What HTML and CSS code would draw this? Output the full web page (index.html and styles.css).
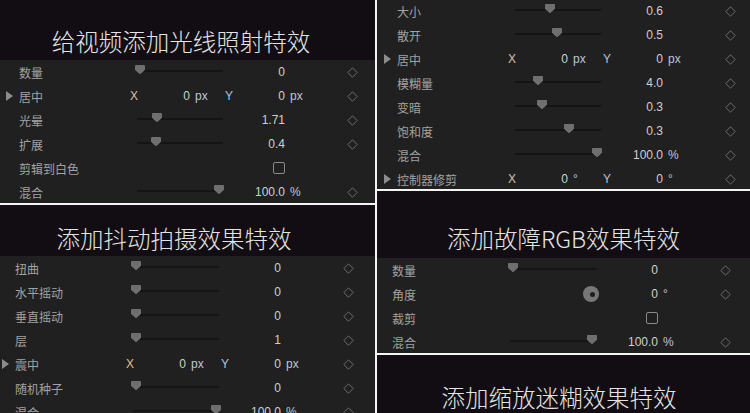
FILE: index.html
```html
<!DOCTYPE html>
<html lang="zh">
<head>
<meta charset="utf-8">
<title>特效</title>
<link rel="stylesheet" href="styles.css">
</head>
<body>
<svg width="0" height="0" class="defs">
  <defs>
    <symbol id="thumb" viewBox="0 0 10 9"><polygon points="0.5,0.5 9.5,0.5 9.5,5 5,8.8 0.5,5" fill="#6f6f6f" stroke="#8a8a8a" stroke-width="0.6"/></symbol>
    <symbol id="diamond" viewBox="0 0 11 11"><polygon points="5.5,0.8 10.2,5.5 5.5,10.2 0.8,5.5" fill="none" stroke="#6c6c6c" stroke-width="1"/></symbol>
    <symbol id="tri" viewBox="0 0 7 10"><polygon points="0,0 7,5 0,10" fill="#8c8c8c"/></symbol>
  </defs>
</svg>
<div class="page">
  <div class="col">
    <section class="panel p-lt">
      <div class="title t-lt">给视频添加光线照射特效</div>
      <div class="rows">
        <div class="row"><span class="arrow"></span><span class="label">数量</span><span class="slider"><span class="track"></span><svg class="thumb" style="left:-2px"><use href="#thumb"/></svg></span><span class="value">0</span><span class="unit"></span><svg class="key"><use href="#diamond"/></svg></div>
        <div class="row xy"><span class="arrow"><svg class="tri"><use href="#tri"/></svg></span><span class="label">居中</span><span class="axis ax">X</span><span class="num">0</span><span class="u1">px</span><span class="axis ay">Y</span><span class="num">0</span><span class="unit">px</span><svg class="key"><use href="#diamond"/></svg></div>
        <div class="row"><span class="arrow"></span><span class="label">光晕</span><span class="slider"><span class="track"></span><svg class="thumb" style="left:15px"><use href="#thumb"/></svg></span><span class="value">1.71</span><span class="unit"></span><svg class="key"><use href="#diamond"/></svg></div>
        <div class="row"><span class="arrow"></span><span class="label">扩展</span><span class="slider"><span class="track"></span><svg class="thumb" style="left:14px"><use href="#thumb"/></svg></span><span class="value">0.4</span><span class="unit"></span><svg class="key"><use href="#diamond"/></svg></div>
        <div class="row"><span class="arrow"></span><span class="label">剪辑到白色</span><span class="slider"></span><span class="value"><span class="check"></span></span><span class="unit"></span></div>
        <div class="row"><span class="arrow"></span><span class="label">混合</span><span class="slider"><span class="track"></span><svg class="thumb" style="left:77px"><use href="#thumb"/></svg></span><span class="value">100.0</span><span class="unit">%</span><svg class="key"><use href="#diamond"/></svg></div>
      </div>
    </section>
    <section class="panel p-lb">
      <div class="title t-lb">添加抖动拍摄效果特效</div>
      <div class="rows">
        <div class="row"><span class="arrow"></span><span class="label">扭曲</span><span class="slider"><span class="track"></span><svg class="thumb" style="left:-2px"><use href="#thumb"/></svg></span><span class="value">0</span><span class="unit"></span><svg class="key"><use href="#diamond"/></svg></div>
        <div class="row"><span class="arrow"></span><span class="label">水平摇动</span><span class="slider"><span class="track"></span><svg class="thumb" style="left:-2px"><use href="#thumb"/></svg></span><span class="value">0</span><span class="unit"></span><svg class="key"><use href="#diamond"/></svg></div>
        <div class="row"><span class="arrow"></span><span class="label">垂直摇动</span><span class="slider"><span class="track"></span><svg class="thumb" style="left:-2px"><use href="#thumb"/></svg></span><span class="value">0</span><span class="unit"></span><svg class="key"><use href="#diamond"/></svg></div>
        <div class="row"><span class="arrow"></span><span class="label">层</span><span class="slider"><span class="track"></span><svg class="thumb" style="left:-2px"><use href="#thumb"/></svg></span><span class="value">1</span><span class="unit"></span><svg class="key"><use href="#diamond"/></svg></div>
        <div class="row xy"><span class="arrow"><svg class="tri"><use href="#tri"/></svg></span><span class="label">震中</span><span class="axis ax">X</span><span class="num">0</span><span class="u1">px</span><span class="axis ay">Y</span><span class="num">0</span><span class="unit">px</span><svg class="key"><use href="#diamond"/></svg></div>
        <div class="row"><span class="arrow"></span><span class="label">随机种子</span><span class="slider"><span class="track"></span><svg class="thumb" style="left:-2px"><use href="#thumb"/></svg></span><span class="value">0</span><span class="unit"></span><svg class="key"><use href="#diamond"/></svg></div>
        <div class="row"><span class="arrow"></span><span class="label">混合</span><span class="slider"><span class="track"></span><svg class="thumb" style="left:78px"><use href="#thumb"/></svg></span><span class="value">100.0</span><span class="unit">%</span><svg class="key"><use href="#diamond"/></svg></div>
      </div>
    </section>
  </div>
  <div class="col">
    <section class="panel p-rt">
      <div class="rows">
        <div class="row"><span class="arrow"></span><span class="label">大小</span><span class="slider"><span class="track"></span><svg class="thumb" style="left:30px"><use href="#thumb"/></svg></span><span class="value">0.6</span><span class="unit"></span><svg class="key"><use href="#diamond"/></svg></div>
        <div class="row"><span class="arrow"></span><span class="label">散开</span><span class="slider"><span class="track"></span><svg class="thumb" style="left:37px"><use href="#thumb"/></svg></span><span class="value">0.5</span><span class="unit"></span><svg class="key"><use href="#diamond"/></svg></div>
        <div class="row xy"><span class="arrow"><svg class="tri"><use href="#tri"/></svg></span><span class="label">居中</span><span class="axis ax">X</span><span class="num">0</span><span class="u1">px</span><span class="axis ay">Y</span><span class="num">0</span><span class="unit">px</span><svg class="key"><use href="#diamond"/></svg></div>
        <div class="row"><span class="arrow"></span><span class="label">模糊量</span><span class="slider"><span class="track"></span><svg class="thumb" style="left:18px"><use href="#thumb"/></svg></span><span class="value">4.0</span><span class="unit"></span><svg class="key"><use href="#diamond"/></svg></div>
        <div class="row"><span class="arrow"></span><span class="label">变暗</span><span class="slider"><span class="track"></span><svg class="thumb" style="left:22px"><use href="#thumb"/></svg></span><span class="value">0.3</span><span class="unit"></span><svg class="key"><use href="#diamond"/></svg></div>
        <div class="row"><span class="arrow"></span><span class="label">饱和度</span><span class="slider"><span class="track"></span><svg class="thumb" style="left:49px"><use href="#thumb"/></svg></span><span class="value">0.3</span><span class="unit"></span><svg class="key"><use href="#diamond"/></svg></div>
        <div class="row"><span class="arrow"></span><span class="label">混合</span><span class="slider"><span class="track"></span><svg class="thumb" style="left:77px"><use href="#thumb"/></svg></span><span class="value">100.0</span><span class="unit">%</span><svg class="key"><use href="#diamond"/></svg></div>
        <div class="row xy"><span class="arrow"><svg class="tri"><use href="#tri"/></svg></span><span class="label">控制器修剪</span><span class="axis ax">X</span><span class="num">0</span><span class="u1">°</span><span class="axis ay">Y</span><span class="num">0</span><span class="unit">°</span><svg class="key"><use href="#diamond"/></svg></div>
      </div>
    </section>
    <section class="panel p-rb">
      <div class="title t-rb">添加故障RGB效果特效</div>
      <div class="rows">
        <div class="row"><span class="arrow"></span><span class="label">数量</span><span class="slider"><span class="track"></span><svg class="thumb" style="left:-2px"><use href="#thumb"/></svg></span><span class="value">0</span><span class="unit"></span><svg class="key"><use href="#diamond"/></svg></div>
        <div class="row"><span class="arrow"></span><span class="label">角度</span><span class="slider dialbox"><span class="dial"><span class="dot"></span></span></span><span class="value">0</span><span class="unit">°</span><svg class="key"><use href="#diamond"/></svg></div>
        <div class="row"><span class="arrow"></span><span class="label">裁剪</span><span class="slider"></span><span class="value"><span class="check"></span></span><span class="unit"></span></div>
        <div class="row"><span class="arrow"></span><span class="label">混合</span><span class="slider"><span class="track"></span><svg class="thumb" style="left:77px"><use href="#thumb"/></svg></span><span class="value">100.0</span><span class="unit">%</span><svg class="key"><use href="#diamond"/></svg></div>
      </div>
    </section>
    <section class="panel p-last">
      <div class="title t-last">添加缩放迷糊效果特效</div>
    </section>
  </div>
</div>
</body>
</html>
```

FILE: styles.css
```css
html, body {
  margin: 0;
  padding: 0;
  background: #f4f4f4;
}
.defs {
  position: absolute;
  width: 0;
  height: 0;
}
.page {
  width: 750px;
  height: 413px;
  overflow: hidden;
  display: grid;
  grid-template-columns: 375px 373px;
  column-gap: 2px;
  background: #f4f4f4;
}
.col {
  display: flex;
  flex-direction: column;
  gap: 2px;
  height: 413px;
  overflow: hidden;
}
.panel {
  background: #202020;
  overflow: hidden;
  flex: none;
  --shift: 0px;
}
.p-lt { height: 203px; }
.p-lb { height: 208px; --shift: -4px; }
.p-rt { height: 189px; --shift: 1px; }
.p-rb { height: 162px; --shift: -4px; }
.p-last { flex: 1; background: #110d12; }

.title {
  background: #110d12;
  color: #e4e4e4;
  font-family: "Noto Sans CJK SC", "Noto Sans", sans-serif;
  font-weight: 300;
  font-size: 23.5px;
  line-height: 24px;
  display: flex;
  justify-content: center;
  align-items: flex-end;
  box-sizing: border-box;
  letter-spacing: 0;
}
.t-lt { height: 60px; padding-bottom: 7px; padding-right: 13px; }
.t-lb { height: 51px; padding-bottom: 6px; padding-right: 27px; }
.t-rb { height: 67px; padding-bottom: 8px; }
.t-last { height: 58px; align-items: flex-start; padding-top: 30px; padding-right: 9px; }

.p-rt .rows { margin-top: -1px; }

.row {
  display: flex;
  align-items: center;
  height: 24px;
  box-sizing: border-box;
  padding-left: calc(6px + var(--shift));
  font-family: "Liberation Sans", Arial, sans-serif;
  font-size: 12px;
  color: #cfcfcf;
}
.arrow {
  width: 13px;
  height: 24px;
  display: flex;
  align-items: center;
  flex: none;
}
.tri {
  width: 7px;
  height: 10px;
}
.label {
  width: 118px;
  flex: none;
  font-family: "Noto Sans CJK SC", "Noto Sans", sans-serif;
  font-size: 12px;
  color: #a2a2a2;
  white-space: nowrap;
}
.xy .label { width: 111px; }
.slider {
  width: 86px;
  height: 24px;
  position: relative;
  flex: none;
}
.track {
  position: absolute;
  left: 0;
  right: 0;
  top: 10px;
  height: 2px;
  background: #141414;
}
.thumb {
  position: absolute;
  top: 5px;
  width: 10px;
  height: 9px;
}
.value {
  width: 62px;
  flex: none;
  text-align: right;
  display: flex;
  justify-content: flex-end;
  align-items: center;
}
.unit {
  width: 62px;
  flex: none;
  padding-left: 5px;
  box-sizing: border-box;
  color: #bcc6dc;
}
.axis {
  width: 10px;
  flex: none;
}
.ax { color: #d8c0a0; }
.ay { color: #a8c6e4; }
.num {
  width: 50px;
  flex: none;
  text-align: right;
}
.u1 {
  width: 35px;
  flex: none;
  padding-left: 5px;
  box-sizing: border-box;
  color: #bcc6dc;
}
.key {
  width: 11px;
  height: 11px;
  flex: none;
}
.check {
  width: 10px;
  height: 10px;
  border: 1px solid #8a8a8a;
  border-radius: 2px;
  display: block;
}
.dialbox {
  display: flex;
  align-items: center;
}
.dial {
  margin-left: 73px;
  width: 16px;
  height: 16px;
  border-radius: 50%;
  background: #777777;
  display: flex;
  align-items: center;
  justify-content: center;
  flex: none;
}
.dot {
  width: 5px;
  height: 5px;
  border-radius: 50%;
  background: #1e1e1e;
  margin-left: 3px;
}
```
